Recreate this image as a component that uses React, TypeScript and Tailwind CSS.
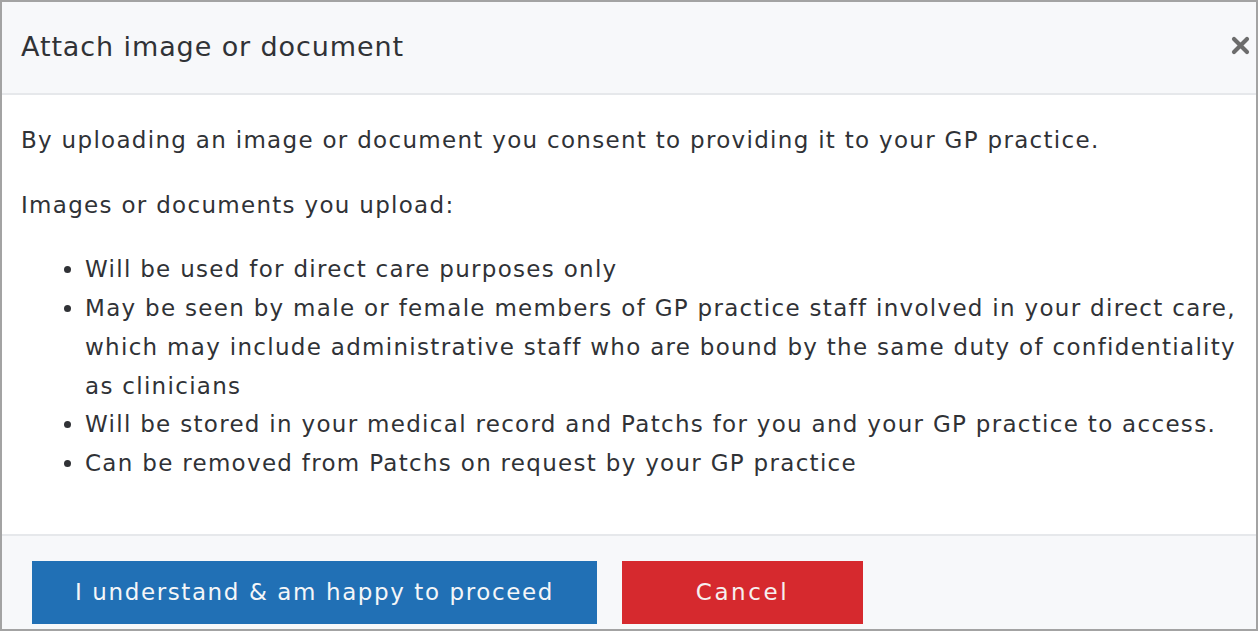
import React from "react";

export default function App() {
  const font = { fontFamily: "'DejaVu Sans', sans-serif" };
  return (
    <div className="w-[1258px] h-[631px] bg-white" style={font}>
      <div className="flex flex-col h-full border-2 border-[#a3a3a3] text-[#303236]">
        <div className="h-[93px] shrink-0 bg-[#f7f8fa] border-b-2 border-[#e6e8eb] flex items-center justify-between pl-[19px] pr-[6px]">
          <h2 className="text-[27px] tracking-[0.9px] font-normal">Attach image or document</h2>
          <svg width="19" height="19" viewBox="0 0 19 19" className="mt-[-4px]">
            <path d="M3 3 L16 16 M16 3 L3 16" stroke="#6c6c6c" strokeWidth="4.2" strokeLinecap="round" />
          </svg>
        </div>
        <div className="flex-1 pl-[19px] pt-[26px] text-[23px] tracking-[1.3px] leading-[38.7px] whitespace-nowrap">
          <p>By uploading an image or document you consent to providing it to your GP practice.</p>
          <p className="mt-[26px]">Images or documents you upload:</p>
          <ul className="list-disc pl-[64px] mt-[26px]">
            <li>Will be used for direct care purposes only</li>
            <li>
              May be seen by male or female members of GP practice staff involved in your direct care,
              <br />
              which may include administrative staff who are bound by the same duty of confidentiality
              <br />
              as clinicians
            </li>
            <li>Will be stored in your medical record and Patchs for you and your GP practice to access.</li>
            <li>Can be removed from Patchs on request by your GP practice</li>
          </ul>
        </div>
        <div className="h-[95px] shrink-0 bg-[#f7f8fa] border-t-2 border-[#e6e8eb] flex items-start gap-[25px] pl-[30px] pt-[25px]">
          <button className="w-[565px] h-[63px] bg-[#2170b5] text-[#f4f6f8] text-[23px] tracking-[1.6px]">I understand &amp; am happy to proceed</button>
          <button className="w-[241px] h-[63px] bg-[#d6292e] text-[#f6f0f0] text-[23px] tracking-[2.6px]">Cancel</button>
        </div>
      </div>
    </div>
  );
}
